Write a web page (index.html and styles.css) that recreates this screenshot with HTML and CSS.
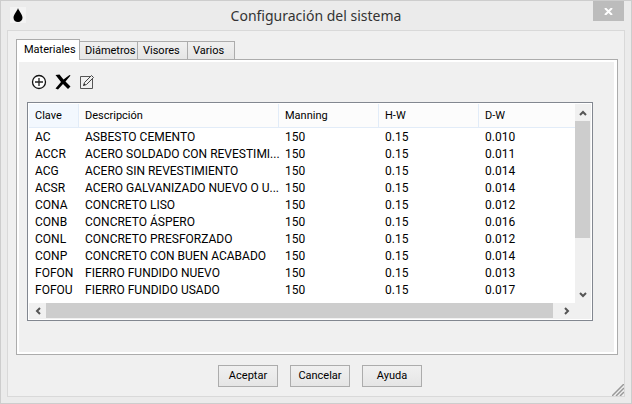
FILE: index.html
```html
<!DOCTYPE html>
<html lang="es">
<head>
<meta charset="utf-8">
<title>Configuración del sistema</title>
<link rel="stylesheet" href="styles.css">
</head>
<body>
<main class="window">
  <header class="titlebar">
    <span class="app-icon"><svg width="16" height="16" viewBox="0 0 16 16" aria-hidden="true"><path d="M8 1C7.300 4 3.500 7.200 3.500 10.700C3.500 13.400 5.500 15 8 15S12.500 13.300 12.500 10.700C12.500 7.200 8.800 4 8 1Z" fill="#000"/></svg></span>
    <h1 class="title">Configuración del sistema</h1>
    <button class="close" type="button" aria-label="Cerrar"><svg width="9" height="7" viewBox="0 0 9 7" aria-hidden="true"><path d="M1 0L8 7M8 0L1 7" stroke="#fff" stroke-width="2"/></svg></button>
  </header>
  <section class="client">
    <div class="tabs" role="tablist">
      <button class="tab tab-active" type="button" role="tab" aria-selected="true">Materiales</button>
      <button class="tab" type="button" role="tab">Diámetros</button>
      <button class="tab" type="button" role="tab">Visores</button>
      <button class="tab" type="button" role="tab">Varios</button>
    </div>
    <div class="page" role="tabpanel">
      <div class="toolbar">
        <button class="tool" type="button" aria-label="Agregar"><svg width="16" height="16" viewBox="0 0 16 16" aria-hidden="true"><circle cx="8" cy="8" r="6.500" fill="#fff" stroke="#111" stroke-width="1.300"/><path d="M4 8H12M8 4V12" stroke="#222" stroke-width="1.300"/></svg></button>
        <button class="tool" type="button" aria-label="Eliminar"><svg width="16" height="16" viewBox="0 0 16 16" aria-hidden="true"><path d="M.5 1L4.500 .5L8.500 5.500L14.500 1L15.500 1.500L10.500 7.500L15.500 12.500L13 15L8 10L3 15.500L.5 14.500L6 8Z" fill="#000"/></svg></button>
        <button class="tool" type="button" aria-label="Editar"><svg width="16" height="16" viewBox="0 0 16 16" aria-hidden="true"><path d="M12 2.500H1.500V14.500H13.500V4" fill="none" stroke="#555"/><path d="M4.500 11.500L5.500 8.500L12.500 1.500L14.500 3.500L7.500 10.500Z" fill="#eee" stroke="#444"/><path d="M4 12L5.500 9.500L6.500 10.500Z" fill="#222"/></svg></button>
      </div>
      <div class="list">
        <table class="grid">
          <colgroup><col class="c-key"><col class="c-desc"><col class="c-num"><col class="c-num"><col></colgroup>
          <thead><tr><th>Clave</th><th>Descripción</th><th>Manning</th><th>H-W</th><th>D-W</th></tr></thead>
          <tbody>
            <tr><td>AC</td><td>ASBESTO CEMENTO</td><td>150</td><td>0.15</td><td>0.010</td></tr>
            <tr><td>ACCR</td><td>ACERO SOLDADO CON REVESTIMI...</td><td>150</td><td>0.15</td><td>0.011</td></tr>
            <tr><td>ACG</td><td>ACERO SIN REVESTIMIENTO</td><td>150</td><td>0.15</td><td>0.014</td></tr>
            <tr><td>ACSR</td><td>ACERO GALVANIZADO NUEVO O U...</td><td>150</td><td>0.15</td><td>0.014</td></tr>
            <tr><td>CONA</td><td>CONCRETO LISO</td><td>150</td><td>0.15</td><td>0.012</td></tr>
            <tr><td>CONB</td><td>CONCRETO ÁSPERO</td><td>150</td><td>0.15</td><td>0.016</td></tr>
            <tr><td>CONL</td><td>CONCRETO PRESFORZADO</td><td>150</td><td>0.15</td><td>0.012</td></tr>
            <tr><td>CONP</td><td>CONCRETO CON BUEN ACABADO</td><td>150</td><td>0.15</td><td>0.014</td></tr>
            <tr><td>FOFON</td><td>FIERRO FUNDIDO NUEVO</td><td>150</td><td>0.15</td><td>0.013</td></tr>
            <tr><td>FOFOU</td><td>FIERRO FUNDIDO USADO</td><td>150</td><td>0.15</td><td>0.017</td></tr>
          </tbody>
        </table>
        <div class="scroll scroll-v">
          <button class="arrow" type="button" aria-label="Subir"><svg width="8" height="6" viewBox="0 0 8 6" aria-hidden="true"><path d="M1 5L4 2L7 5" fill="none" stroke="#555" stroke-width="2"/></svg></button>
          <div class="track"><div class="thumb"></div></div>
          <button class="arrow" type="button" aria-label="Bajar"><svg width="8" height="6" viewBox="0 0 8 6" aria-hidden="true"><path d="M1 1L4 4L7 1" fill="none" stroke="#555" stroke-width="2"/></svg></button>
        </div>
        <div class="scroll scroll-h">
          <button class="arrow" type="button" aria-label="Izquierda"><svg width="6" height="8" viewBox="0 0 6 8" aria-hidden="true"><path d="M5 1L2 4L5 7" fill="none" stroke="#555" stroke-width="2"/></svg></button>
          <div class="track"><div class="thumb"></div></div>
          <button class="arrow" type="button" aria-label="Derecha"><svg width="6" height="8" viewBox="0 0 6 8" aria-hidden="true"><path d="M1 1L4 4L1 7" fill="none" stroke="#555" stroke-width="2"/></svg></button>
        </div>
      </div>
    </div>
    <footer class="actions">
      <button class="btn" type="button">Aceptar</button>
      <button class="btn" type="button">Cancelar</button>
      <button class="btn" type="button">Ayuda</button>
    </footer>
    <svg class="grip" width="12" height="12" viewBox="0 0 12 12" aria-hidden="true"><path d="M0 12L12 0M4 12L12 4M8 12L12 8" stroke="#999" stroke-width="1.500"/></svg>
  </section>
</main>
</body>
</html>
```

FILE: styles.css
```css
* { box-sizing: border-box; }

body {
  margin: 0;
  font: 11px/16px Roboto, "Liberation Sans", sans-serif;
  color: #000;
}

button {
  margin: 0;
  padding: 0;
  border: 0;
  background: none;
  font: inherit;
  color: inherit;
}

svg { display: block; }

.window {
  min-height: 100vh;
  display: flex;
  flex-direction: column;
  padding: 0 6px 6px;
  border: 1px solid #cdcdcd;
  background: #ebebeb;
}

.titlebar {
  display: grid;
  grid-template-columns: 32px 1fr 32px;
  height: 29px;
}

.app-icon {
  justify-self: start;
  margin: 6px 0 0 3px;
  height: 16px;
  background: #f3f3f3;
}

.title {
  margin: 0;
  font: 14px/30px "Noto Sans", "Open Sans", sans-serif;
  text-align: center;
  color: #333;
}

.close {
  width: 31px;
  height: 20px;
  display: grid;
  place-items: center;
  background: #bcbcbc;
}

.client {
  position: relative;
  flex: 1;
  padding: 8px 6px 8px 8px;
  border: 1px solid #d9d9d9;
  background: #f0f0f0;
}

.tabs {
  display: grid;
  grid-template-columns: 64px 58px 50px 47px;
  align-items: end;
  height: 20px;
}

.tab {
  height: 18px;
  padding: 0 0 0 5px;
  border: 1px solid #acacac;
  border-bottom: 0;
  border-left-width: 0;
  background: linear-gradient(#f0f0f0, #e5e5e5);
  text-align: left;
  white-space: nowrap;
}

.tab-active {
  position: relative;
  height: 21px;
  margin-bottom: -1px;
  padding-left: 7px;
  border-left-width: 1px;
  background: #fff;
}

.page {
  padding: 12px 24px 33px 10px;
  border: 1px solid #acacac;
  background: #f0f0f0;
  box-shadow: inset 2px 2px #fff, inset -3px -2px #fff;
}

.toolbar {
  display: flex;
  gap: 8px;
  padding: 2px 4px 12px;
}

.tool {
  width: 16px;
  height: 16px;
}

.list {
  display: grid;
  grid-template-columns: 1fr 16px;
  grid-template-rows: auto 16px;
  padding: 1px;
  border: 1px solid #828790;
  background: #fff;
}

.grid {
  width: 100%;
  margin-bottom: 5px;
  table-layout: fixed;
  border-collapse: separate;
  border-spacing: 0;
}

.c-key { width: 50px; }
.c-desc { width: 200px; }
.c-num { width: 100px; }

.grid th,
.grid td {
  height: 17px;
  padding: 0 0 0 6px;
  font-weight: 400;
  text-align: left;
  white-space: nowrap;
}

.grid td { font-size: 12px; }

.grid th {
  height: 24px;
  border-right: 1px solid #e2ecf8;
  border-bottom: 1px solid #e2ecf8;
  background: #fcfcfc;
}

.grid th:first-child { background: #f3f8fe; }
.grid th:last-child { border-right: 0; }

.scroll {
  display: flex;
  background: #f0f0f0;
}

.scroll-v {
  flex-direction: column;
  padding-right: 1px;
}

.scroll-h {
  grid-column: 1 / -1;
  padding: 0 16px 1px 0;
}

.arrow {
  flex: none;
  width: 17px;
  height: 15px;
  display: grid;
  place-items: center;
}

.scroll-v .arrow {
  width: 15px;
  height: 17px;
}

.track { flex: 1; }

.thumb { background: #cdcdcd; }

.scroll-v .thumb {
  width: 100%;
  height: 71%;
}

.scroll-h .thumb {
  width: 99%;
  height: 100%;
}

.actions {
  display: flex;
  justify-content: center;
  gap: 12px;
  padding: 10px 0 0 6px;
}

.btn {
  width: 60px;
  height: 22px;
  border: 1px solid #acacac;
  background: linear-gradient(#f0f0f0, #e5e5e5);
}

.grip {
  position: absolute;
  right: 0;
  bottom: 0;
}
```
